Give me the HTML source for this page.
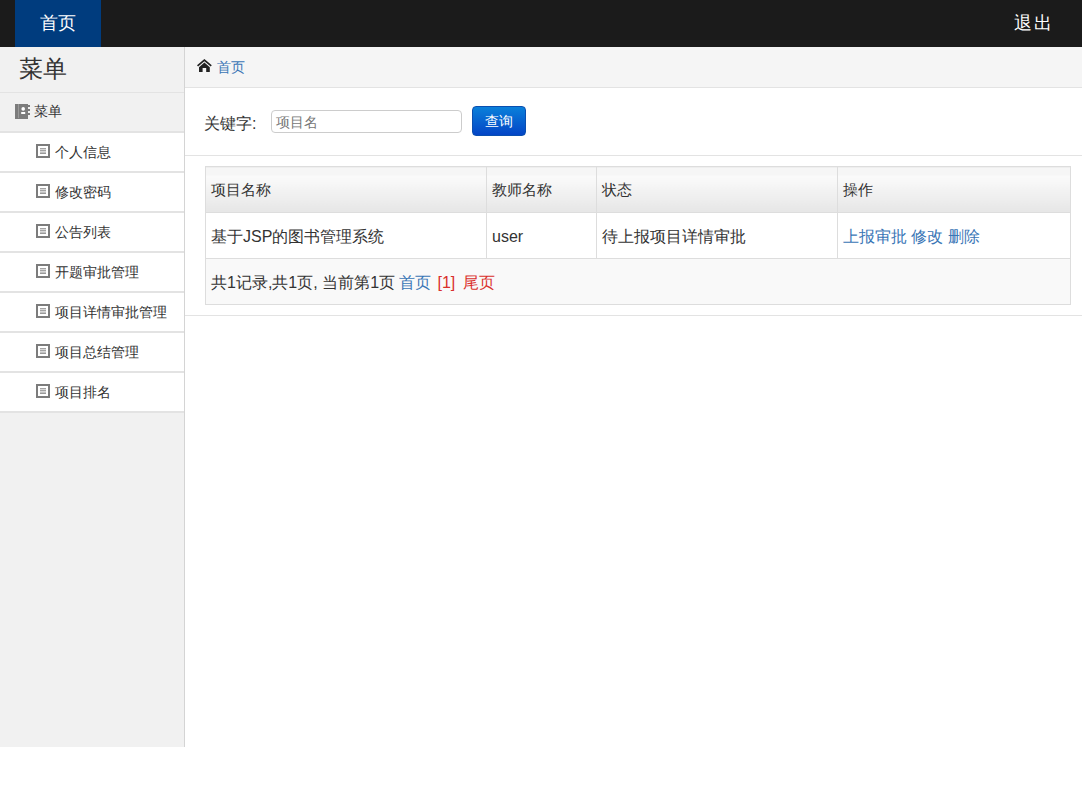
<!DOCTYPE html>
<html><head><meta charset="utf-8">
<style>
*{box-sizing:border-box;margin:0;padding:0}
html,body{width:1082px;height:791px;overflow:hidden;background:#fff}
body{font-family:"Liberation Sans",sans-serif;color:#333;font-size:14px;position:relative}
.abs{position:absolute;white-space:nowrap}
.top{position:absolute;left:0;top:0;width:1082px;height:47px;background:#1b1b1b}
.top .home{position:absolute;left:15px;top:0;width:86px;height:47px;background:#003c7e;color:#fff;font-size:18px;line-height:46px;text-align:center}
.top .out{position:absolute;left:1014px;top:0;color:#fff;font-size:18px;line-height:46px;letter-spacing:2px}
.side{position:absolute;left:0;top:47px;width:185px;height:700px;background:#f1f1f1;border-right:1px solid #d4d4d4}
.side h2{position:absolute;left:19px;top:1px;font-weight:normal;font-size:24px;line-height:42px;color:#333}
.side .mh{position:absolute;left:0;top:45px;width:184px;height:41px;border-top:1px solid #e3e3e3;border-bottom:2px solid #e3e3e3;font-size:14px;line-height:37px;padding-left:34px}
.side .it{position:absolute;left:0;width:184px;height:40px;background:#fff;border-bottom:2px solid #e3e3e3;font-size:14px;line-height:38px;padding-left:55px}
.side .it svg{position:absolute;left:36px;top:11px}
.side .mh svg{position:absolute;left:15px;top:11px}
.main{position:absolute;left:185px;top:47px;width:897px;height:744px}
.bc{position:absolute;left:0;top:0;width:897px;height:41px;background:#f5f5f5;border-bottom:1px solid #e3e3e3}
.bc svg{position:absolute;left:12px;top:12px}
.bc span{position:absolute;left:32px;top:1px;line-height:40px;color:#3a76b6;font-size:13.5px}
.srch{position:absolute;left:0;top:41px;width:897px;height:68px;border-bottom:1px solid #e3e3e3}
.srch .lb{position:absolute;left:19px;top:25px;font-size:16px;line-height:22px}
.srch .inp{position:absolute;left:86px;top:22px;width:191px;height:23px;border:1px solid #ccc;border-radius:4px;color:#777;font-size:14px;line-height:21px;padding-left:4px;padding-top:1px}
.srch .btn{position:absolute;left:287px;top:18px;width:54px;height:30px;border:1px solid #0a4fb0;border-radius:4px;background:linear-gradient(#0a80da,#0445c6);color:#fff;font-size:14px;line-height:28px;text-align:center}
table{position:absolute;left:20px;top:119px;width:866px;border-collapse:collapse;font-size:16px;table-layout:fixed}
td,th{border:1px solid #ddd;text-align:left;font-weight:normal;padding:0 5px;white-space:nowrap}
th{height:46px;padding-top:2px;background:linear-gradient(#f6f6f6 0,#f6f6f6 8px,#fbfbfb 8px,#e6e6e6 100%);font-size:15px}
td{height:46px;padding-top:3px}
.lnk{color:#3a76b6}
.red{color:#d9302c}
.foot td{background:#f9f9f9}
.hr{position:absolute;left:0;top:268px;width:897px;height:1px;background:#e3e3e3}
</style></head><body>
<div class="top"><div class="home">首页</div><div class="out">退出</div></div>
<div class="side">
  <h2>菜单</h2>
  <div class="mh"><svg width="16" height="15" viewBox="0 0 16 15"><path fill="#7c7c7c" d="M0 0h13v1h2v2h-2v2h2v2h-2v2h2v2h-2v4H0z"/><rect x="3" y="0" width="1" height="14" fill="#9a9a9a"/><circle cx="8.2" cy="4.9" r="1.8" fill="#fff"/><rect x="6.2" y="8" width="4" height="2" fill="#fff"/></svg>菜单</div>
  <div class="it" style="top:86px"><svg width="14" height="14" viewBox="0 0 14 14"><rect x="1" y="1" width="12" height="12" fill="none" stroke="#7c7c7c" stroke-width="2"/><path d="M4 4.8h6M4 6.8h6" stroke="#7c7c7c" stroke-width="1"/><path d="M4 9.2h6" stroke="#9a9a9a" stroke-width="1.6"/></svg>个人信息</div>
  <div class="it" style="top:126px"><svg width="14" height="14" viewBox="0 0 14 14"><rect x="1" y="1" width="12" height="12" fill="none" stroke="#7c7c7c" stroke-width="2"/><path d="M4 4.8h6M4 6.8h6" stroke="#7c7c7c" stroke-width="1"/><path d="M4 9.2h6" stroke="#9a9a9a" stroke-width="1.6"/></svg>修改密码</div>
  <div class="it" style="top:166px"><svg width="14" height="14" viewBox="0 0 14 14"><rect x="1" y="1" width="12" height="12" fill="none" stroke="#7c7c7c" stroke-width="2"/><path d="M4 4.8h6M4 6.8h6" stroke="#7c7c7c" stroke-width="1"/><path d="M4 9.2h6" stroke="#9a9a9a" stroke-width="1.6"/></svg>公告列表</div>
  <div class="it" style="top:206px"><svg width="14" height="14" viewBox="0 0 14 14"><rect x="1" y="1" width="12" height="12" fill="none" stroke="#7c7c7c" stroke-width="2"/><path d="M4 4.8h6M4 6.8h6" stroke="#7c7c7c" stroke-width="1"/><path d="M4 9.2h6" stroke="#9a9a9a" stroke-width="1.6"/></svg>开题审批管理</div>
  <div class="it" style="top:246px"><svg width="14" height="14" viewBox="0 0 14 14"><rect x="1" y="1" width="12" height="12" fill="none" stroke="#7c7c7c" stroke-width="2"/><path d="M4 4.8h6M4 6.8h6" stroke="#7c7c7c" stroke-width="1"/><path d="M4 9.2h6" stroke="#9a9a9a" stroke-width="1.6"/></svg>项目详情审批管理</div>
  <div class="it" style="top:286px"><svg width="14" height="14" viewBox="0 0 14 14"><rect x="1" y="1" width="12" height="12" fill="none" stroke="#7c7c7c" stroke-width="2"/><path d="M4 4.8h6M4 6.8h6" stroke="#7c7c7c" stroke-width="1"/><path d="M4 9.2h6" stroke="#9a9a9a" stroke-width="1.6"/></svg>项目总结管理</div>
  <div class="it" style="top:326px"><svg width="14" height="14" viewBox="0 0 14 14"><rect x="1" y="1" width="12" height="12" fill="none" stroke="#7c7c7c" stroke-width="2"/><path d="M4 4.8h6M4 6.8h6" stroke="#7c7c7c" stroke-width="1"/><path d="M4 9.2h6" stroke="#9a9a9a" stroke-width="1.6"/></svg>项目排名</div>
</div>
<div class="main">
  <div class="bc"><svg width="16" height="14" viewBox="0 0 16 14"><path fill="#222" d="M7.4 0L0 6.3 1.1 7.6 7.4 2.3 13.7 7.6 14.8 6.3z M7.4 3.6L2 8.2V12.9H5.6V9H9.2V12.9H12.8V8.2z"/></svg><span>首页</span></div>
  <div class="srch"><div class="lb">关键字:</div><div class="inp">项目名</div><div class="btn">查询</div></div>
  <table>
    <colgroup><col style="width:281px"><col style="width:110px"><col style="width:241px"><col></colgroup>
    <tr><th>项目名称</th><th>教师名称</th><th>状态</th><th>操作</th></tr>
    <tr><td>基于JSP的图书管理系统</td><td>user</td><td>待上报项目详情审批</td><td class="lnk">上报审批 修改 删除</td></tr>
    <tr class="foot"><td colspan="4">共1记录,共1页, 当前第1页 <span class="lnk">首页</span> <span class="red" style="margin-left:1.5px">[1]</span> <span class="red" style="margin-left:3px">尾页</span></td></tr>
  </table>
  <div class="hr"></div>
</div>
</body></html>
